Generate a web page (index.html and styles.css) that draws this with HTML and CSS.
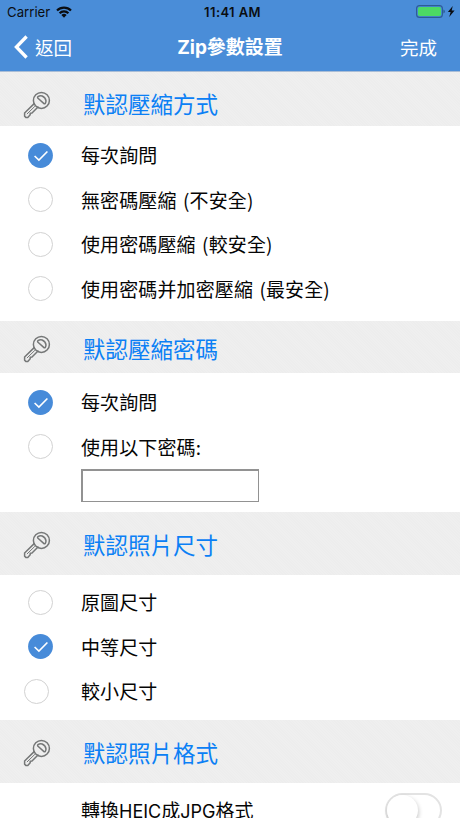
FILE: index.html
```html
<!DOCTYPE html>
<html lang="zh-Hant">
<head>
<meta charset="utf-8">
<title>Zip參數設置</title>
<link rel="stylesheet" href="styles.css">
</head>
<body>
<svg class="defs" width="0" height="0">
  <symbol id="key" viewBox="0 0 28 28">
    <g fill="none" stroke="#757777" stroke-width="1.5" stroke-linejoin="round" stroke-linecap="round">
      <circle cx="18.4" cy="9.4" r="8"/>
      <path d="M15 5.6q2-1.4 4.2-.6 3.4 1.4 3.8 4.8 0 1.4-.7 2.6-.8.8-1.6 0l-5.7-5.2q-.8-.8 0-1.6Z"/>
      <path d="M11.2 12.6 1.6 22v3.2l1.2 1.2h2l2.4-2.6v-1.6l1.8-.2 6-6"/>
      <path d="M11.6 15.6 4.2 22.8" stroke-width="1"/>
    </g>
  </symbol>
  <symbol id="check" viewBox="0 0 25 25">
    <circle cx="12.5" cy="12.5" r="12.4" fill="#478bd9"/>
    <path d="m6.6 13 4.3 4.1 8.5-8.6" fill="none" stroke="#fff" stroke-width="1.6"/>
  </symbol>
</svg>
<header class="top">
  <div class="status">
    <div class="carrier"><span>Carrier</span>
      <svg width="16" height="12" viewBox="0 0 16 12"><g fill="none" stroke="#0a0d12" stroke-width="2.2"><path d="M1 4.5a10 10 0 0 1 14 0"/><path d="M3.6 7.3a6.2 6.2 0 0 1 8.8 0"/></g><path d="M5.4 9.1a3.7 3.7 0 0 1 5.2 0L8 11.8Z" fill="#0a0d12"/></svg>
    </div>
    <div class="clock">11:41 AM</div>
    <div class="power">
      <svg width="41" height="14" viewBox="0 0 41 14"><rect x=".6" y=".6" width="25.8" height="11.8" rx="3" fill="none" stroke="#2d5c94" stroke-width="1.1"/><rect x="2" y="2" width="23" height="9" rx="1.8" fill="#4cd964"/><path d="M27.4 4.5q1.5.5 1.5 2t-1.5 2Z" fill="#2d5c94"/><path d="m36.7 1-4.8 6h2.7l-1.4 5 5.4-6.4h-2.9Z" fill="#0a0d12"/></svg>
    </div>
  </div>
  <nav class="nav">
    <div class="back"><svg width="15" height="24" viewBox="0 0 15 24"><path d="M12.6 1.5 2.4 12l10.2 10.5" fill="none" stroke="#fff" stroke-width="3.3"/></svg><span>返回</span></div>
    <h1 class="title">Zip參數設置</h1>
    <div class="done">完成</div>
  </nav>
</header>
<main>
  <h2 class="heading first"><svg class="key"><use href="#key"/></svg><span class="heading-text">默認壓縮方式</span></h2>
  <section class="options methods">
    <div class="row"><svg class="radio"><use href="#check"/></svg>每次詢問</div>
    <div class="row"><span class="radio empty"></span>無密碼壓縮 (不安全)</div>
    <div class="row"><span class="radio empty"></span>使用密碼壓縮 (較安全)</div>
    <div class="row"><span class="radio empty"></span>使用密碼并加密壓縮 (最安全)</div>
  </section>
  <h2 class="heading second"><svg class="key"><use href="#key"/></svg><span class="heading-text">默認壓縮密碼</span></h2>
  <section class="options passwords">
    <div class="row"><svg class="radio"><use href="#check"/></svg>每次詢問</div>
    <div class="row"><span class="radio empty"></span>使用以下密碼:</div>
    <input class="password" type="text">
  </section>
  <h2 class="heading"><svg class="key"><use href="#key"/></svg><span class="heading-text">默認照片尺寸</span></h2>
  <section class="options sizes">
    <div class="row"><span class="radio empty"></span>原圖尺寸</div>
    <div class="row"><svg class="radio"><use href="#check"/></svg>中等尺寸</div>
    <div class="row shifted"><span class="radio empty"></span>較小尺寸</div>
  </section>
  <h2 class="heading"><svg class="key"><use href="#key"/></svg><span class="heading-text">默認照片格式</span></h2>
  <section class="format">
    <span class="format-label">轉換<span class="latin">HEIC</span>成<span class="latin">JPG</span>格式</span>
    <span class="switch"><span class="knob"></span></span>
  </section>
</main>
</body>
</html>
```
FILE: styles.css
```css
* { box-sizing: border-box; }
html, body { height: 818px; overflow: hidden; }
body {
  margin: 0;
  background: #fff;
  color: #050505;
  font-family: "Noto Sans CJK TC", sans-serif;
}
.defs { display: block; height: 0; }
.top {
  height: 72px;
  background: #4a8dd8;
  border-bottom: 1px solid #a9bdd6;
}
.status {
  height: 24px;
  display: grid;
  grid-template-columns: 1fr auto 1fr;
  align-items: center;
  padding: 0 4px 0 7px;
  color: #0a0d12;
  font: 13.2px/24px Inter, sans-serif;
}
.carrier { display: flex; align-items: center; gap: 6px; }
.clock { font-weight: 600; font-size: 13px; letter-spacing: .4px; padding-left: 2px; }
.power { display: flex; justify-content: flex-end; margin-right: -1px; }
.nav {
  height: 46px;
  display: grid;
  grid-template-columns: 1fr auto 1fr;
  align-items: center;
  padding: 0 23px 0 14px;
  color: #fff;
  font-size: 18.5px;
  line-height: 28px;
}
.back { display: flex; align-items: center; gap: 6px; }
.title {
  margin: 1px 0 0 9px;
  font: 700 19px/28px Inter, "Noto Sans CJK TC", sans-serif;
}
.done { text-align: right; }
.back span, .done { margin-bottom: 1px; }
.heading {
  display: flex;
  align-items: center;
  gap: 32px;
  height: 63px;
  margin: 0;
  padding: 3px 0 0 23px;
  background: repeating-linear-gradient(45deg, #ededed 0 1px, #efefef 1px 2px);
  color: #0b80f5;
  font-size: 22.5px;
  font-weight: 400;
  line-height: 30px;
}
.heading-text { padding-bottom: 3px; }
.first { height: 54px; padding-top: 11px; }
.second { height: 52px; padding-top: 4px; }
.key { width: 28px; height: 28px; flex: none; }
.methods { height: 195px; padding-top: 7px; }
.passwords { height: 139px; padding-top: 7px; }
.sizes { height: 145px; padding-top: 5px; }
.row {
  display: flex;
  align-items: center;
  gap: 28px;
  height: 44.5px;
  padding-left: 28px;
  font-size: 19px;
  line-height: 28px;
  letter-spacing: .12px;
  word-spacing: 2px;
}
.shifted { padding-left: 24px; gap: 32px; }
.radio { width: 25px; height: 25px; flex: none; }
.empty { border: 1.3px solid #d2d2d2; border-radius: 50%; }
.password {
  display: block;
  width: 178px;
  height: 33px;
  margin: 0 0 0 81px;
  border: 2px solid #929292;
  border-right-width: 1px;
  border-bottom-width: 1px;
  background: #fff;
}
.format {
  display: flex;
  justify-content: space-between;
  align-items: flex-start;
  height: 35px;
  padding: 10px 18px 0 81px;
  font-size: 19px;
  line-height: 34px;
  overflow: hidden;
}
.latin { font-family: Inter, sans-serif; font-size: 18px; }
.switch {
  width: 57px;
  height: 35px;
  border: 2px solid #e3e3e3;
  border-radius: 18px;
}
.knob {
  display: block;
  width: 31px;
  height: 31px;
  border-radius: 50%;
  background: #fff;
  box-shadow: 1px 2px 4px rgba(0, 0, 0, .2);
}
```
